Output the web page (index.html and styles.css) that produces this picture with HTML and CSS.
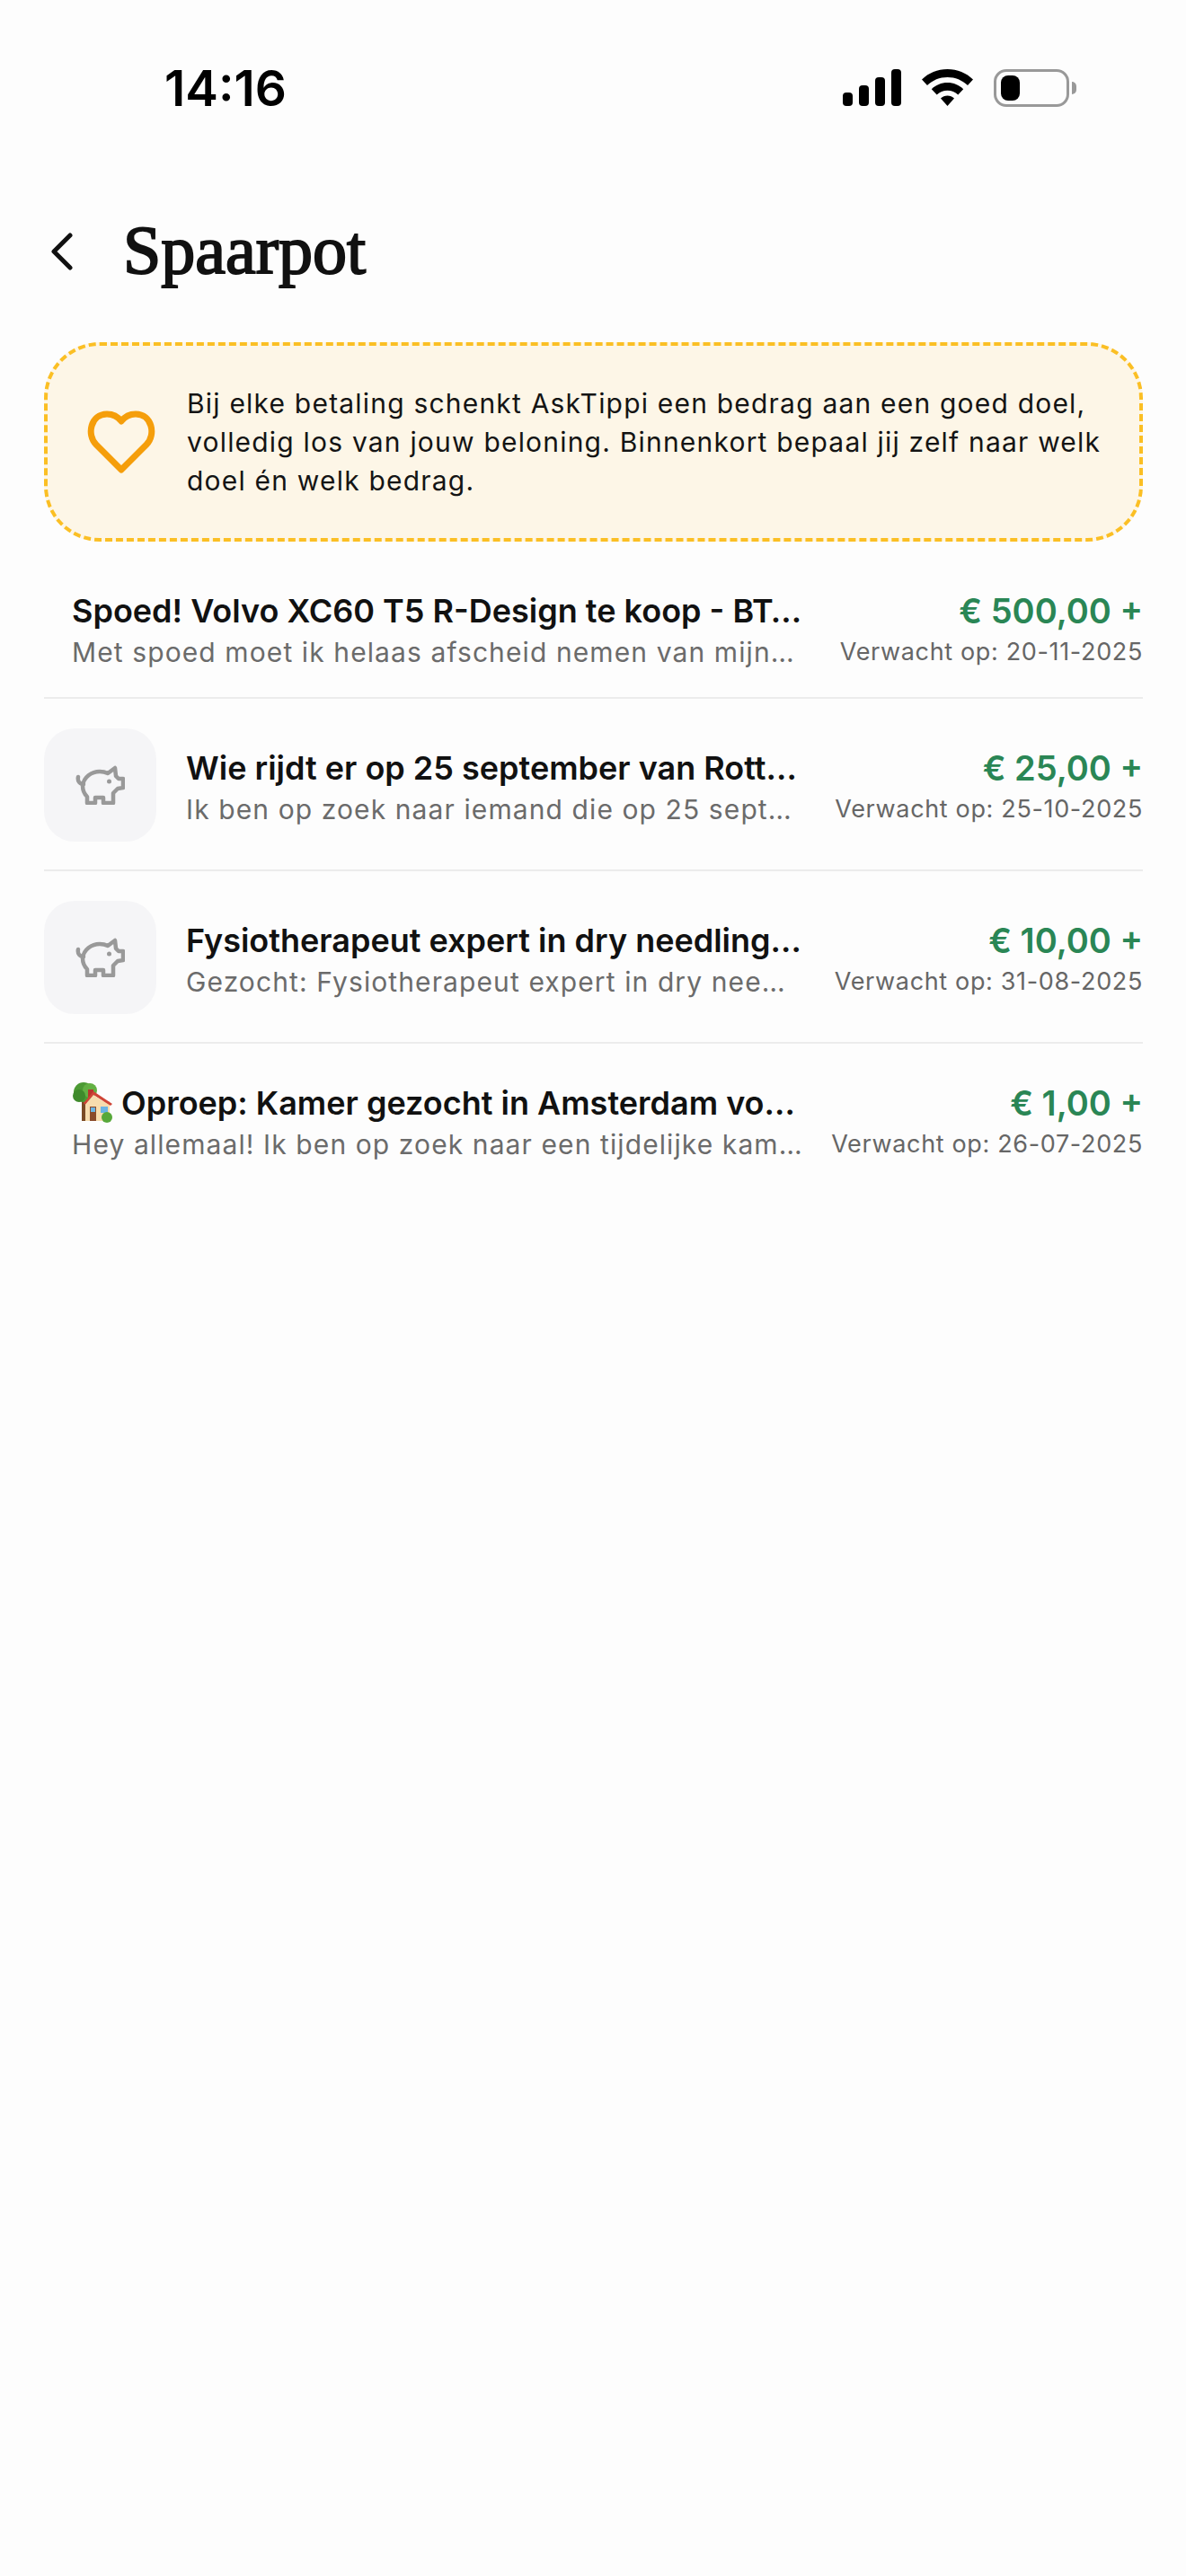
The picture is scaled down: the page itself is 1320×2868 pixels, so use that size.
FILE: index.html
```html
<!DOCTYPE html>
<html lang="nl">
<head>
  <meta charset="UTF-8" />
  <title>Spaarpot</title>
  <link rel="stylesheet" href="styles.css">
</head>
<body>

  <!-- Status bar -->
  <div class="status-bar">
    <span class="time">14:16</span>
    <div class="status-icons">
      <div class="signal">
        <span class="bar bar-1"></span>
        <span class="bar bar-2"></span>
        <span class="bar bar-3"></span>
        <span class="bar bar-4"></span>
      </div>
      <svg class="wifi" width="57" height="41" viewBox="0 0 57 41">
        <path d="M28.500 0C17.500 0 7.500 4.200 0 11.500L6 18C12 12.300 19.800 9 28.500 9C37.200 9 45 12.300 51 18L57 11.500C49.500 4.200 39.500 0 28.500 0Z" />
        <path d="M28.500 15C21.700 15 15.400 17.700 10.800 22.200L16.700 28.500C19.800 25.500 23.900 23.700 28.500 23.700C33.100 23.700 37.200 25.500 40.300 28.500L46.200 22.200C41.600 17.700 35.300 15 28.500 15Z" />
        <path d="M28.500 29.500C25.600 29.500 23 30.600 21 32.500L28.500 41L36 32.500C34 30.600 31.400 29.500 28.500 29.500Z" />
      </svg>
      <div class="battery">
        <div class="battery-body"><span class="battery-fill"></span></div>
        <span class="battery-nub"></span>
      </div>
    </div>
  </div>

  <!-- Header -->
  <header class="page-header">
    <svg class="back" width="25" height="42" viewBox="0 0 25 42">
      <path d="M22 3L4 21L22 39" />
    </svg>
    <h1>Spaarpot</h1>
  </header>

  <!-- Charity notice -->
  <div class="notice">
    <svg class="heart" width="76" height="70" viewBox="0 0 76 70">
      <path d="M38 66L10 38C-1 27 4 4 22 4C30 4 35 8 38 12C41 8 46 4 54 4C72 4 77 27 66 38Z" />
    </svg>
    <p>Bij elke betaling schenkt AskTippi een bedrag aan een goed doel, volledig los van jouw beloning. Binnenkort bepaal jij zelf naar welk doel én welk bedrag.</p>
  </div>

  <!-- Savings list -->
  <div class="list">
    <div class="row row-plain">
      <div class="row-text">
        <div class="row-title">Spoed! Volvo XC60 T5 R-Design te koop - BT…</div>
        <div class="row-sub">Met spoed moet ik helaas afscheid nemen van mijn…</div>
      </div>
      <div class="row-right">
        <div class="amount">€ 500,00 +</div>
        <div class="expected">Verwacht op: 20-11-2025</div>
      </div>
    </div>

    <div class="row">
      <div class="thumb">
        <svg class="pig" width="55" height="44" viewBox="0 0 55 44">
          <path d="M3 13C2 18 5 21 9 21" />
          <path d="M8 23C9 13 18 7 27 7C31 7 34 8 36 9L44 3L45 12L48 15L53 15L53 25L47 26L42 31L42 42L31 42L31 36L22 36L22 42L13 42L13 35C9 31 8 27 8 23Z" />
          <circle class="pig-eye" cx="37.500" cy="18" r="2.500" />
        </svg>
      </div>
      <div class="row-text">
        <div class="row-title">Wie rijdt er op 25 september van Rott…</div>
        <div class="row-sub">Ik ben op zoek naar iemand die op 25 sept…</div>
      </div>
      <div class="row-right">
        <div class="amount">€ 25,00 +</div>
        <div class="expected">Verwacht op: 25-10-2025</div>
      </div>
    </div>

    <div class="row">
      <div class="thumb">
        <svg class="pig" width="55" height="44" viewBox="0 0 55 44">
          <path d="M3 13C2 18 5 21 9 21" />
          <path d="M8 23C9 13 18 7 27 7C31 7 34 8 36 9L44 3L45 12L48 15L53 15L53 25L47 26L42 31L42 42L31 42L31 36L22 36L22 42L13 42L13 35C9 31 8 27 8 23Z" />
          <circle class="pig-eye" cx="37.500" cy="18" r="2.500" />
        </svg>
      </div>
      <div class="row-text">
        <div class="row-title">Fysiotherapeut expert in dry needling…</div>
        <div class="row-sub">Gezocht: Fysiotherapeut expert in dry nee…</div>
      </div>
      <div class="row-right">
        <div class="amount">€ 10,00 +</div>
        <div class="expected">Verwacht op: 31-08-2025</div>
      </div>
    </div>

    <div class="row row-plain row-last">
      <div class="row-text">
        <div class="row-title">
          <svg class="house" width="45" height="45" viewBox="0 0 45 45">
            <rect x="11" y="18" width="5" height="25" fill="#7a4a25" />
            <circle cx="13" cy="11" r="11" fill="#4c9a34" />
            <circle cx="20" cy="9" r="8" fill="#63b043" />
            <circle cx="8" cy="15" r="7" fill="#3f8a2c" />
            <rect x="18" y="8" width="6" height="9" fill="#b8352c" />
            <rect x="15" y="21" width="27" height="22" fill="#f7dcae" />
            <path d="M13 23L24 10L45 24L43 26L24 14L15 25Z" fill="#cf4436" />
            <path d="M24 14L15 25V27H42V26Z" fill="#f7dcae" />
            <rect x="20" y="27" width="7" height="16" fill="#8a4a2a" />
            <rect x="21" y="28" width="5" height="5" fill="#6bb4e4" />
            <rect x="32" y="27" width="8" height="7" fill="#6bb4e4" />
            <circle cx="39" cy="39" r="6" fill="#57a83a" />
          </svg>
          <span>Oproep: Kamer gezocht in Amsterdam vo…</span>
        </div>
        <div class="row-sub">Hey allemaal! Ik ben op zoek naar een tijdelijke kam…</div>
      </div>
      <div class="row-right">
        <div class="amount">€ 1,00 +</div>
        <div class="expected">Verwacht op: 26-07-2025</div>
      </div>
    </div>
  </div>

</body>
</html>
```

FILE: styles.css
```css
* { box-sizing: border-box; margin: 0; padding: 0; }
html, body {
  height: 100%;
  font-family: 'Inter', sans-serif;
  background: #fdfdfd;
  color: #111;
}

/* STATUS BAR */
.status-bar {
  display: flex;
  justify-content: space-between;
  align-items: center;
  height: 75px;
  margin-top: 60px;
  padding: 0 122px 0 183px;
}

.time {
  color: #000;
  font-size: 55px;
  font-weight: 600;
  line-height: 56px;
}

.status-icons {
  display: flex;
  align-items: center;
  gap: 23px;
}

.signal {
  display: flex;
  align-items: flex-end;
  gap: 7px;
  height: 41px;
}

.bar {
  width: 11px;
  background: #000;
  border-radius: 4px;
}

.bar-1 { height: 15px; }
.bar-2 { height: 23px; }
.bar-3 { height: 32px; }
.bar-4 { height: 41px; }

.wifi path { fill: #000; }

.battery {
  display: flex;
  align-items: center;
  gap: 3px;
}

.battery-body {
  width: 84px;
  height: 42px;
  padding: 4px 5px;
  border: 3px solid #999;
  border-radius: 14px;
}

.battery-fill {
  display: block;
  width: 21px;
  height: 28px;
  background: #000;
  border-radius: 8px;
}

.battery-nub {
  width: 5px;
  height: 14px;
  background: #999;
  border-radius: 0 5px 5px 0;
}

/* HEADER */
.page-header {
  display: flex;
  align-items: center;
  height: 76px;
  margin-top: 105px;
  padding-left: 56px;
}

.back {
  margin-top: 3px;
}

.back path {
  fill: none;
  stroke: #111;
  stroke-width: 5;
  stroke-linecap: round;
  stroke-linejoin: round;
}

h1 {
  margin-left: 56px;
  font-family: 'Liberation Serif', serif;
  font-size: 76px;
  font-weight: 400;
  line-height: 76px;
  -webkit-text-stroke: 2px #111;
}

/* NOTICE */
.notice {
  display: flex;
  align-items: center;
  gap: 35px;
  margin: 65px 48px 0 49px;
  height: 222px;
  padding: 0 30px 0 44px;
  background: #fdf6e7;
  border: 4px dashed #fbbf24;
  border-radius: 62px;
}

.heart { flex: none; }

.heart path {
  fill: none;
  stroke: #f59e0b;
  stroke-width: 7;
  stroke-linejoin: round;
}

.notice p {
  font-size: 30px;
  line-height: 43px;
  letter-spacing: 1.2px;
  color: #141414;
}

/* LIST */
.list {
  margin: 26px 48px 0 49px;
}

.row {
  display: flex;
  align-items: center;
  padding: 33px 0 31px;
  border-bottom: 2px solid #ececec;
}

.row-plain { padding: 23px 0 30px 31px; }

.row-last {
  padding-top: 37px;
  border-bottom: none;
}

.thumb {
  flex: none;
  display: flex;
  align-items: center;
  justify-content: center;
  width: 125px;
  height: 126px;
  margin-right: 33px;
  background: #f5f5f7;
  border-radius: 34px;
}

.pig path {
  fill: none;
  stroke: #999;
  stroke-width: 4.500;
  stroke-linejoin: round;
  stroke-linecap: round;
}

.pig-eye { fill: #999; }

.row-text {
  flex: 1;
  min-width: 0;
  padding-top: 6px;
}

.row-title {
  display: flex;
  align-items: center;
  gap: 10px;
  font-size: 36px;
  font-weight: 600;
  line-height: 44px;
  white-space: nowrap;
  color: #111;
}

.house { flex: none; }

.row-sub {
  margin-top: 4px;
  font-size: 30px;
  line-height: 40px;
  letter-spacing: 1.100px;
  white-space: nowrap;
  color: #6b6b6b;
}

.row-right {
  flex: none;
  padding-top: 6px;
  text-align: right;
}

.amount {
  font-size: 38px;
  font-weight: 600;
  line-height: 44px;
  white-space: nowrap;
  color: #2a8655;
}

.expected {
  margin-top: 4px;
  font-size: 27px;
  line-height: 40px;
  letter-spacing: 0.650px;
  white-space: nowrap;
  color: #666;
}
```
